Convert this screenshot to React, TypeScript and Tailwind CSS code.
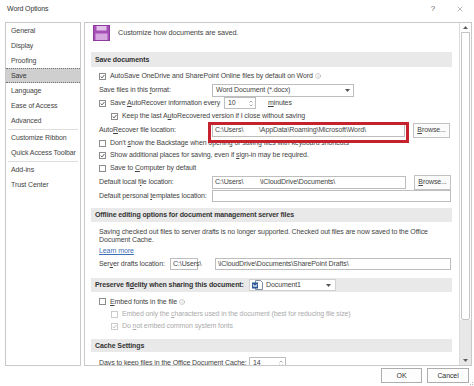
import { Info, X } from 'lucide-react'

const navTop = ['General', 'Display', 'Proofing', 'Save', 'Language', 'Ease of Access', 'Advanced']
const navMid = ['Customize Ribbon', 'Quick Access Toolbar']
const navEnd = ['Add-ins', 'Trust Center']

function Check({ checked, disabled }: { checked?: boolean; disabled?: boolean }) {
  return (
    <span
      className={`w-[7px] h-[7px] border shrink-0 flex items-center justify-center bg-white ${
        disabled ? 'border-[#cbcbcb]' : 'border-[#8c8c8c]'
      }`}
    >
      {checked && (
        <svg width="5" height="5" viewBox="0 0 10 10">
          <path d="M1.5 5.2 4 7.8 8.6 2.2" fill="none" stroke={disabled ? '#b3b3b3' : '#3a3a3a'} strokeWidth="1.7" />
        </svg>
      )}
    </span>
  )
}

function Caret() {
  return (
    <svg width="5" height="3" viewBox="0 0 10 6" className="shrink-0">
      <path d="M0 0h10L5 6z" fill="#555" />
    </svg>
  )
}

function Spin({ value, width }: { value: string; width: string }) {
  return (
    <div className={`h-[12px] ${width} shrink-0 border border-[#bdbdbd] bg-white flex items-center pl-[3px] pr-[2px]`}>
      <span className="flex-1">{value}</span>
      <div className="flex flex-col gap-[1px]">
        <svg width="4" height="3" viewBox="0 0 8 5"><path d="M1 4.5 4 1.5 7 4.5" fill="none" stroke="#777" strokeWidth="1.2" /></svg>
        <svg width="4" height="3" viewBox="0 0 8 5"><path d="M1 0.5 4 3.5 7 0.5" fill="none" stroke="#777" strokeWidth="1.2" /></svg>
      </div>
    </div>
  )
}

function Browse() {
  return (
    <button className="ml-[8px] w-[37px] h-[15px] border border-[#c2c2c2] bg-[#fbfbfb] text-[#444] flex items-center justify-center">
      <span><u>B</u>rowse...</span>
    </button>
  )
}

function Band({ children, h = 'h-[15px]' }: { children: React.ReactNode; h?: string }) {
  return (
    <div className={`${h} bg-[#e9e9e9] flex items-center pl-[4px] font-bold text-[#333]`}>{children}</div>
  )
}

function SaveIcon() {
  return (
    <svg width="17" height="16" viewBox="0 0 17 16" className="shrink-0">
      <rect x="0.5" y="0.5" width="16" height="15" fill="#a64fb6" />
      <rect x="3.5" y="0.5" width="10" height="5" fill="#e4c3ea" />
      <rect x="2.5" y="8.5" width="12" height="7" fill="#d7a8e0" />
      <rect x="0.5" y="0.5" width="16" height="15" fill="none" stroke="#8d3c9e" />
    </svg>
  )
}

function DocIcon() {
  return (
    <svg width="11" height="10" viewBox="0 0 11 10" className="shrink-0">
      <path d="M3.5 0.5h5l2 2v7h-7z" fill="#fff" stroke="#7f8ea6" />
      <rect x="0" y="2.5" width="6" height="6" fill="#2b5797" />
      <path d="M1 4l1 3 1-2 1 2 1-3" fill="none" stroke="#fff" strokeWidth="0.7" />
    </svg>
  )
}

export default function App() {
  return (
    <div className="w-[474px] h-[386px] bg-white overflow-hidden relative font-['Liberation_Sans',Arial,sans-serif] text-[7px] leading-[8px] tracking-[-0.1px] whitespace-nowrap text-[#444]">
      {/* title bar */}
      <div className="h-[22px] flex items-center pb-[4px] pl-[7px] pr-[10px] text-[#333]">
        <span className="text-[7px]">Word Options</span>
        <div className="ml-auto flex items-center gap-[21px] text-[#666]">
          <span className="text-[8px]">?</span>
          <X size={8} strokeWidth={1.2} color="#555" />
        </div>
      </div>

      <div className="flex h-[344px]">
        {/* nav */}
        <div className="ml-[5px] w-[76px] border border-[#c9c9c9] flex flex-col">
          {navTop.map(n => (
            <div
              key={n}
              className={`h-[15px] shrink-0 flex items-center pl-[5px] ${
                n === 'Save' ? 'bg-[#cfcfcf] border-y border-dotted border-[#6f6f6f] text-[#333]' : ''
              }`}
            >
              {n}
            </div>
          ))}
          <div className="h-[2px] flex items-center px-[2px]"><div className="h-px w-full bg-[#dedede]" /></div>
          {navMid.map(n => (
            <div key={n} className="h-[15px] shrink-0 flex items-center pl-[5px]">{n}</div>
          ))}
          <div className="h-[2px] flex items-center px-[2px]"><div className="h-px w-full bg-[#dedede]" /></div>
          {navEnd.map(n => (
            <div key={n} className="h-[15px] shrink-0 flex items-center pl-[5px]">{n}</div>
          ))}
        </div>

        {/* content */}
        <div className="ml-[3px] w-[388px] border border-[#c9c9c9] flex">
          <div className="flex-1 overflow-hidden pl-[6px] pr-[7px]">
            <div className="mt-[2px] h-[16px] flex items-center gap-[8px] pl-[2px]">
              <SaveIcon />
              <span className="text-[7.3px] text-[#444]">Customize how documents are saved.</span>
            </div>

            <div className="mt-[11px]">
              <Band>Save documents</Band>
            </div>

            <div className="pl-[8px]">
              <div className="mt-[2px] h-[14px] flex items-center gap-[4px]">
                <Check checked />
                <span>AutoSave OneDrive and SharePoint Online files by default on Word</span>
                <Info size={6} strokeWidth={1.6} color="#8a8a8a" className="-ml-[2px]" />
              </div>
              <div className="h-[14px] flex items-center">
                <span className="w-[113px] shrink-0">Save files in this <u>f</u>ormat:</span>
                <div className="w-[142px] h-[13px] border border-[#bdbdbd] bg-white flex items-center pl-[3px] pr-[3px]">
                  <span className="flex-1">Word Document (*.docx)</span>
                  <Caret />
                </div>
              </div>
              <div className="h-[12px] flex items-center">
                <div className="w-[125px] shrink-0 flex items-center gap-[4px]">
                  <Check checked />
                  <span>Save <u>A</u>utoRecover information every</span>
                </div>
                <Spin value="10" width="w-[32px]" />
                <span className="ml-[12px]"><u>m</u>inutes</span>
              </div>
              <div className="h-[14px] flex items-center gap-[4px] pl-[12px]">
                <Check checked />
                <span>Keep the last A<u>u</u>toRecovered version if I close without saving</span>
              </div>
              <div className="h-[14px] flex items-center relative">
                <span className="w-[113px] shrink-0">Auto<u>R</u>ecover file location:</span>
                <div className="w-[193px] h-[13px] border border-[#bdbdbd] bg-white flex items-center pl-[2px]">
                  <span className="w-[44px] shrink-0">{'C:\\Users\\'}</span>
                  <span>{'\\AppData\\Roaming\\Microsoft\\Word\\'}</span>
                </div>
                <Browse />
                <div className="absolute left-[109px] -top-[1px] w-[201px] h-[21px] border-[3px] border-[#c4222c]" />
              </div>
              <div className="h-[12px] flex items-center gap-[4px]">
                <Check />
                <span>Don't <u>s</u>how the Backstage when opening or saving files with keyboard shortcuts</span>
              </div>
              <div className="h-[12px] flex items-center gap-[4px]">
                <Check checked />
                <span>Show additional places for saving, even if <u>s</u>ign-in may be required.</span>
              </div>
              <div className="h-[14px] flex items-center gap-[4px]">
                <Check />
                <span>Save to <u>C</u>omputer by default</span>
              </div>
              <div className="h-[14px] flex items-center">
                <span className="w-[113px] shrink-0">Default local f<u>i</u>le location:</span>
                <div className="w-[194px] h-[13px] border border-[#bdbdbd] bg-white flex items-center pl-[2px]">
                  <span className="w-[45px] shrink-0">{'C:\\Users\\'}</span>
                  <span>{'\\iCloudDrive\\Documents\\'}</span>
                </div>
                <Browse />
              </div>
              <div className="h-[14px] flex items-center">
                <span className="w-[113px] shrink-0">Default personal <u>t</u>emplates location:</span>
                <div className="w-[239px] h-[12px] border border-[#bdbdbd] bg-white" />
              </div>
            </div>

            <div className="mt-[5px]">
              <Band h="h-[14px]">Offline editing options for document management server files</Band>
            </div>

            <div className="pl-[8px]">
              <p className="mt-[6px] leading-[8px]">
                Saving checked out files to server drafts is no longer supported. Checked out files are now saved to the Office
                <br />
                Document Cache.
              </p>
              <div className="mt-[2px] h-[10px] flex items-center">
                <span className="text-[#3f6fb6] underline">Learn more</span>
              </div>
              <div className="mt-[1px] h-[13px] flex items-center">
                <span className="w-[71px] shrink-0">Ser<u>v</u>er drafts location:</span>
                <div className="w-[28px] h-[12px] border border-[#bdbdbd] bg-white flex items-center pl-[2px]">{'C:\\Users\\'}</div>
                <div className="ml-[17px] w-[236px] h-[12px] border border-[#bdbdbd] bg-white flex items-center pl-[2px]">
                  {'\\iCloudDrive\\Documents\\SharePoint Drafts\\'}
                </div>
              </div>
            </div>

            <div className="mt-[8px] h-[14px] bg-[#e9e9e9] flex items-center pl-[4px]">
              <span className="w-[154px] shrink-0 font-bold text-[#333]">Preserve fi<u>d</u>elity when sharing this document:</span>
              <div className="w-[87px] h-[12px] border border-[#d0d0d0] bg-white flex items-center pl-[2px] pr-[4px] gap-[3px]">
                <DocIcon />
                <span className="flex-1">Document1</span>
                <Caret />
              </div>
            </div>

            <div className="pl-[8px]">
              <div className="mt-[3px] h-[13px] flex items-center gap-[4px]">
                <Check />
                <span><u>E</u>mbed fonts in the file</span>
                <Info size={6} strokeWidth={1.6} color="#8a8a8a" className="-ml-[2px]" />
              </div>
              <div className="h-[12px] flex items-center gap-[4px] pl-[12px] text-[#ababab]">
                <Check disabled />
                <span>Embed only the <u>c</u>haracters used in the document (best for reducing file size)</span>
              </div>
              <div className="h-[12px] flex items-center gap-[4px] pl-[12px] text-[#ababab]">
                <Check checked disabled />
                <span>Do <u>n</u>ot embed common system fonts</span>
              </div>
            </div>

            <div className="mt-[7px]">
              <Band h="h-[13px]">Cache Settings</Band>
            </div>

            <div className="pl-[8px]">
              <div className="mt-[4px] h-[14px] flex items-center">
                <span className="w-[150px] shrink-0">Days to keep files in the Office Document Cache:</span>
                <Spin value="14" width="w-[37px]" />
              </div>
            </div>
          </div>

          {/* scrollbar */}
          <div className="w-[12px] border-l border-[#dcdcdc] flex flex-col">
            <div className="h-[9px] flex items-center justify-center">
              <svg width="5" height="3" viewBox="0 0 10 6"><path d="M0 6h10L5 0z" fill="#606060" /></svg>
            </div>
            <div className="mx-[1px] h-[288px] border border-[#c4c4c4] rounded-b-[2px] bg-white" />
            <div className="flex-1 bg-[#e8e8e8]" />
            <div className="h-[10px] bg-[#e8e8e8] flex items-center justify-center">
              <svg width="5" height="3" viewBox="0 0 10 6"><path d="M0 0h10L5 6z" fill="#606060" /></svg>
            </div>
          </div>
        </div>
      </div>

      {/* buttons */}
      <div className="mt-[2px] flex justify-end gap-[5px] pr-[5px]">
        <button className="w-[41px] h-[15px] border border-[#adadad] bg-[#fdfdfd] text-[#333] flex items-center justify-center">OK</button>
        <button className="w-[42px] h-[15px] border border-[#adadad] bg-[#fdfdfd] text-[#333] flex items-center justify-center">Cancel</button>
      </div>

      <div className="absolute right-[1px] bottom-[1px] grid grid-cols-3 gap-[1px]">
        <span />
        <span />
        <span className="w-px h-px bg-[#9fb6cf]" />
        <span />
        <span className="w-px h-px bg-[#9fb6cf]" />
        <span className="w-px h-px bg-[#9fb6cf]" />
      </div>
    </div>
  )
}
